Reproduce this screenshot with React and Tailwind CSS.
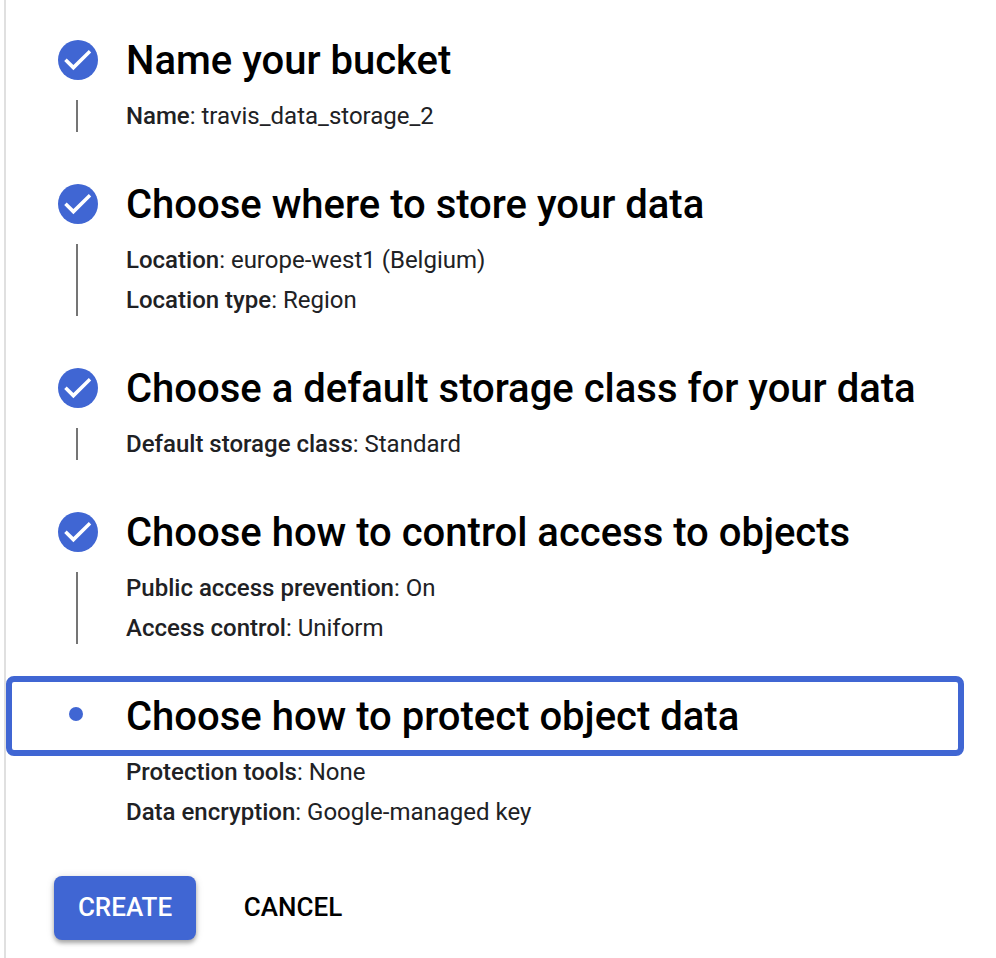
const steps = [
  { title: "Name your bucket", details: [["Name", "travis_data_storage_2"]] },
  { title: "Choose where to store your data", details: [["Location", "europe-west1 (Belgium)"], ["Location type", "Region"]] },
  { title: "Choose a default storage class for your data", details: [["Default storage class", "Standard"]] },
  { title: "Choose how to control access to objects", details: [["Public access prevention", "On"], ["Access control", "Uniform"]] },
  { title: "Choose how to protect object data", active: true, details: [["Protection tools", "None"], ["Data encryption", "Google-managed key"]] },
];

function Check() {
  return (
    <svg className="h-10 w-10" viewBox="0 0 40 40">
      <circle cx="20" cy="20" r="20" fill="#4066d3" />
      <path d="M15.4 30.2L6.2 21L8.7 18.5L15.4 25.1L30.8 10.1L33.2 12.5Z" fill="white" />
    </svg>
  );
}

function Step({ title, details, active }) {
  return (
    <section className="pb-3">
      <header className={`flex h-20 w-[958px] items-center rounded-lg border-[6px] ${active ? "border-[#4066d3]" : "border-transparent"}`}>
        <div className="ml-[46px] flex w-10 shrink-0 justify-center">
          {active ? <span className="mb-1 mr-1 h-3.5 w-3.5 rounded-full bg-[#4066d3]" /> : <Check />}
        </div>
        <h2 className="ml-7 whitespace-nowrap pt-0.5 text-[40px] font-medium leading-[48px] text-black">{title}</h2>
      </header>
      <div className="flex pb-4">
        <div className={`ml-[70px] w-0.5 shrink-0 ${active ? "" : "mb-1 bg-[#757575]"}`} />
        <dl className="-mt-1 ml-12 text-[24px] leading-10 text-[#202124]">
          {details.map(([label, value]) => (
            <div key={label} className="flex whitespace-pre">
              <dt className="font-medium">{label}</dt>
              <dd>: {value}</dd>
            </div>
          ))}
        </dl>
      </div>
    </section>
  );
}

export default function App() {
  return (
    <main className="h-[958px] w-[996px] overflow-hidden bg-white pl-1 font-['Roboto',sans-serif]">
      <div className="h-full border-l-2 border-[#e0e0e0] pt-5">
        {steps.map((step) => <Step key={step.title} {...step} />)}
        <div className="ml-12 mt-4 flex h-16 gap-6 text-[26px] font-medium">
          <button className="w-[142px] rounded-lg bg-[#4066d3] pb-0.5 text-white shadow-[0_3px_4px_rgba(0,0,0,0.3),0_1px_8px_rgba(0,0,0,0.12)]">CREATE</button>
          <button className="w-[146px] pb-0.5 text-black">CANCEL</button>
        </div>
      </div>
    </main>
  );
}
